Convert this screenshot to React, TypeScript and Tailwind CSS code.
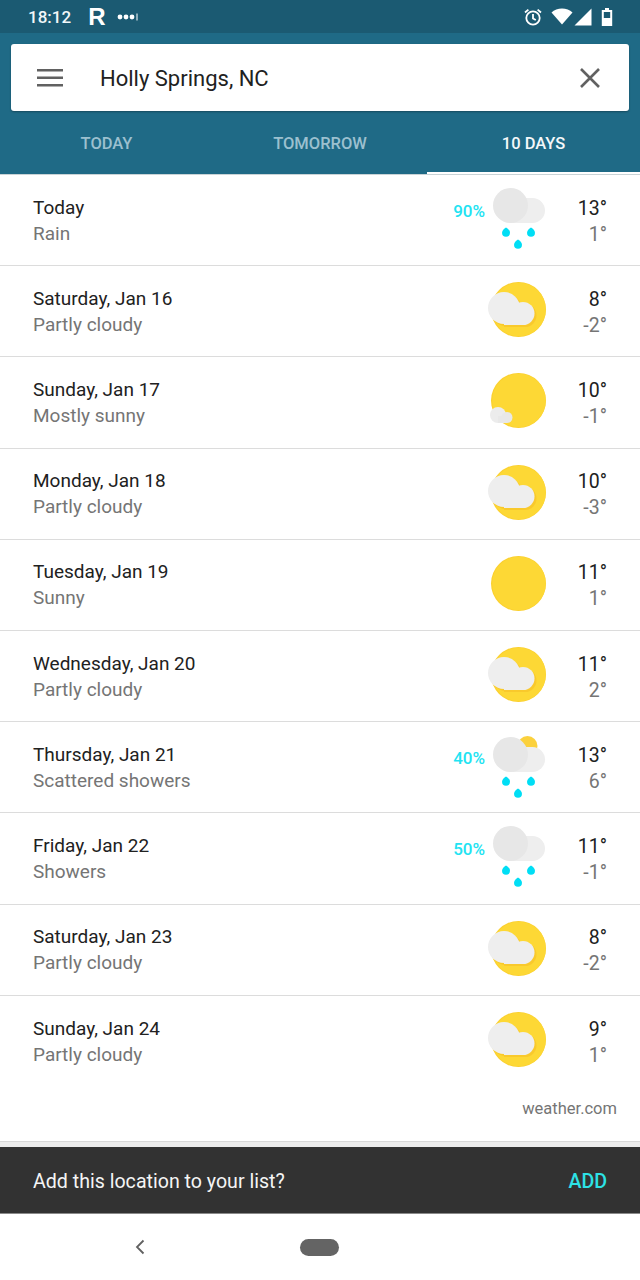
import React from "react";

type Kind = "rain" | "scattered" | "partly" | "mostly" | "sunny";

const days: { t: string; s: string; k: Kind; p?: string; hi: string; lo: string }[] = [
  { t: "Today", s: "Rain", k: "rain", p: "90%", hi: "13°", lo: "1°" },
  { t: "Saturday, Jan 16", s: "Partly cloudy", k: "partly", hi: "8°", lo: "-2°" },
  { t: "Sunday, Jan 17", s: "Mostly sunny", k: "mostly", hi: "10°", lo: "-1°" },
  { t: "Monday, Jan 18", s: "Partly cloudy", k: "partly", hi: "10°", lo: "-3°" },
  { t: "Tuesday, Jan 19", s: "Sunny", k: "sunny", hi: "11°", lo: "1°" },
  { t: "Wednesday, Jan 20", s: "Partly cloudy", k: "partly", hi: "11°", lo: "2°" },
  { t: "Thursday, Jan 21", s: "Scattered showers", k: "scattered", p: "40%", hi: "13°", lo: "6°" },
  { t: "Friday, Jan 22", s: "Showers", k: "rain", p: "50%", hi: "11°", lo: "-1°" },
  { t: "Saturday, Jan 23", s: "Partly cloudy", k: "partly", hi: "8°", lo: "-2°" },
  { t: "Sunday, Jan 24", s: "Partly cloudy", k: "partly", hi: "9°", lo: "1°" },
];

function Drop({ x, y }: { x: number; y: number }) {
  return <path d={`M${x} ${y - 4.5}C${x + 2} ${y - 3.5} ${x + 4} ${y - 1.5} ${x + 4} ${y + 0.8}A4 4 0 0 1 ${x - 4} ${y + 0.8}C${x - 4} ${y - 1.5} ${x - 2} ${y - 3.5} ${x} ${y - 4.5}Z`} fill="#00def5" />;
}

function WeatherIcon({ kind }: { kind: Kind }) {
  if (kind === "rain" || kind === "scattered") {
    const d = kind === "scattered" ? 2 : 0;
    return (
      <svg width="64" height="64" viewBox="0 0 64 64">
        {kind === "scattered" && <circle cx="41.500" cy="11" r="10" fill="#fbd13d" />}
        <path d={`M46.500 ${10 + d}A12.500 12.500 0 0 1 46.500 ${35 + d}L24.500 ${35 + d}L24.500 ${10 + d}Z`} fill="#eeeeee" />
        <circle cx="24.500" cy={17.5 + d} r="17.500" fill="#e7e7e7" />
        <Drop x={20} y={44 + d} />
        <Drop x={45} y={44 + d} />
        <Drop x={32} y={56 + d} />
      </svg>
    );
  }
  return (
    <svg width="64" height="64" viewBox="0 0 64 64">
      <defs>
        <clipPath id="sun-clip">
          <circle cx="32.500" cy="30.500" r="27.500" />
        </clipPath>
      </defs>
      <circle cx="32.500" cy="30.500" r="27.500" fill="#fbd02f" />
      <circle cx="33" cy="30.500" r="26.800" fill="#fdd835" />
      {kind === "partly" && (
        <g>
          <g clipPath="url(#sun-clip)" fill="#f9c92c">
            <circle cx="20" cy="31" r="16" />
            <circle cx="39" cy="36.500" r="11.500" />
            <rect x="18" y="35" width="21" height="13" />
          </g>
          <g fill="#eeeeee">
            <circle cx="18" cy="29" r="16" />
            <circle cx="37" cy="34.500" r="11.500" />
            <rect x="18" y="33" width="19" height="13" />
          </g>
        </g>
      )}
      {kind === "mostly" && (
        <g>
          <circle cx="12" cy="45" r="8" fill="#ececec" />
          <circle cx="21" cy="47.500" r="5.500" fill="#e8e8e8" />
          <rect x="12" y="46" width="9" height="7" fill="#e8e8e8" />
        </g>
      )}
    </svg>
  );
}

function Row({ d, last }: { d: (typeof days)[number]; last: boolean }) {
  return (
    <div className={`flex h-[91.2px] items-center pl-[33px] pr-[33px] ${last ? "" : "border-b border-[#dcdcdc]"}`}>
      <div className="flex-1 pt-[1px]">
        <div className="text-[19px] leading-[26px] text-[#212121]">{d.t}</div>
        <div className="text-[19px] leading-[26px] text-[#757575]">{d.s}</div>
      </div>
      {d.p && <div className="mb-[17px] mr-[1px] text-[17px] font-medium text-[#22e3f2]">{d.p}</div>}
      <div className="h-[64px] w-[64px] shrink-0">
        <WeatherIcon kind={d.k} />
      </div>
      <div className="w-[57px] shrink-0 pt-[3px] text-right">
        <div className="text-[19.5px] leading-[26px] text-[#212121]">{d.hi}</div>
        <div className="text-[19.5px] leading-[26px] text-[#757575]">{d.lo}</div>
      </div>
    </div>
  );
}

export default function App() {
  return (
    <div className="flex h-[1280px] w-[640px] flex-col overflow-hidden bg-white font-['Roboto',sans-serif]">
      <div className="flex h-[33px] items-center bg-[#1b5a72] pl-[28px] pr-[27px] text-white">
        <span className="pt-[2px] text-[17px] font-medium text-[#f2f7f9]">18:12</span>
        <span className="ml-[17px] font-['Liberation_Sans',sans-serif] text-[24px] font-bold leading-none">R</span>
        <svg className="ml-[12px]" width="22" height="10" viewBox="0 0 22 10" fill="white">
          <circle cx="3" cy="5" r="2.400" />
          <circle cx="9" cy="5" r="2.400" />
          <circle cx="15" cy="5" r="2.400" />
          <rect x="19.500" y="1.500" width="1" height="7" />
        </svg>
        <div className="ml-auto flex items-center">
          <svg width="20" height="20" viewBox="0 0 20 20" fill="none" stroke="white" strokeWidth="1.800">
            <circle cx="10" cy="11" r="6.700" />
            <path d="M10 7v4.400l2.800 1.700M2 5.500 5.400 2.600M18 5.500l-3.400-2.900" />
          </svg>
          <svg className="ml-[8px]" width="22" height="17" viewBox="0 0 22 17" fill="white">
            <path d="M11 16.500 0.500 4.500C3.200 2 7 .5 11 .5s7.800 1.500 10.500 4Z" />
          </svg>
          <svg className="ml-[1px]" width="18" height="18" viewBox="0 0 18 18" fill="white">
            <path d="M17.500.5V17.500H0.500Z" />
          </svg>
          <svg className="ml-[9px]" width="12" height="18" viewBox="0 0 12 18">
            <path d="M4 0h4v2h3.200v16H.8V2H4Z" fill="white" />
            <rect x="2.800" y="4" width="6.400" height="6" fill="#1b5a72" />
          </svg>
        </div>
      </div>

      <div className="flex h-[142px] flex-col border-b border-[#c9d3d6] bg-[#1f6a86]">
        <div className="px-[11px] pt-[11px]">
          <div className="flex h-[67px] items-center rounded-[3px] bg-white pl-[26px] pr-[28px] shadow-[0_1px_2px_rgba(0,0,0,0.3)]">
            <svg width="26" height="18" viewBox="0 0 26 18" fill="#616161">
              <rect y="0" width="26" height="2.500" />
              <rect y="7.500" width="26" height="2.500" />
              <rect y="15" width="26" height="2.500" />
            </svg>
            <span className="ml-[37px] flex-1 pt-[1px] text-[22px] text-[#212121]">Holly Springs, NC</span>
            <svg width="22" height="22" viewBox="0 0 22 22" stroke="#616161" strokeWidth="2.600" fill="none">
              <path d="M2 2 20 20M20 2 2 20" />
            </svg>
          </div>
        </div>
        <div className="flex flex-1 text-[16.5px] font-medium">
          <div className="flex w-[213px] items-center justify-center pt-[4px] text-[#9cc0cf]">TODAY</div>
          <div className="flex w-[214px] items-center justify-center pt-[4px] text-[#9cc0cf]">TOMORROW</div>
          <div className="flex w-[213px] items-center justify-center border-b-[2px] border-white pt-[6px] text-[#f4f8fa]">10 DAYS</div>
        </div>
      </div>

      <div className="flex-1">
        {days.map((d, i) => (
          <Row key={i} d={d} last={i === days.length - 1} />
        ))}
        <div className="pr-[23px] pt-[10px] text-right text-[16.5px] text-[#757575]">weather.com</div>
      </div>

      <div className="h-[6px] border-t border-[#d8d8d8] bg-[#ececec]" />
      <div className="flex h-[67px] items-center justify-between border-b border-[#8a8a8a] bg-[#323232] pl-[33px] pr-[33px] pt-[3px] text-[19.6px]">
        <span className="text-[#f5f5f5]">Add this location to your list?</span>
        <span className="font-medium text-[#2de2e6]">ADD</span>
      </div>
      <div className="relative flex h-[66px] items-center justify-center bg-white">
        <svg className="absolute left-[134px] top-[25px]" width="12" height="16" viewBox="0 0 12 16" fill="none" stroke="#616161" strokeWidth="1.800">
          <path d="M9.500 1.500 3 8l6.500 6.500" />
        </svg>
        <div className="mr-[1px] h-[17px] w-[39px] rounded-full bg-[#646464]" />
      </div>
    </div>
  );
}
